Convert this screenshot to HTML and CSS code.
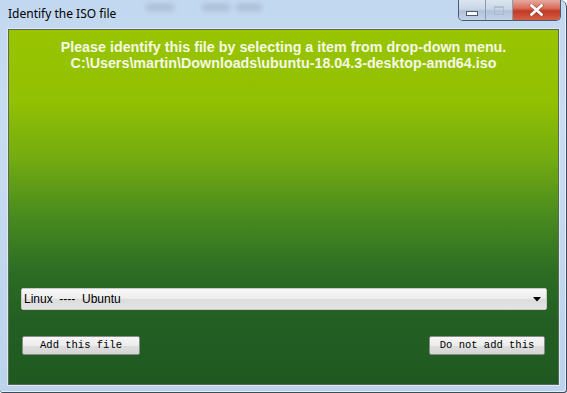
FILE: index.html
```html
<!DOCTYPE html>
<html>
<head>
<meta charset="utf-8">
<link rel="stylesheet" href="styles.css">
</head>
<body>
<div class="window">
  <div class="titlebar">
    <span class="title">Identify the ISO file</span>
    <span class="ghost g1"></span>
    <span class="ghost g2"></span>
    <span class="ghost g3"></span>
    <div class="caption">
      <div class="cbtn min"><span class="min-bar"></span></div>
      <div class="cbtn max"><span class="max-box"></span></div>
      <div class="cbtn close">
        <svg width="15" height="12" viewBox="0 0 15 12"><path d="M2.5 1.5 L12.5 10.5 M12.5 1.5 L2.5 10.5" stroke="#7a2a20" stroke-width="4.2" stroke-linecap="round" stroke-opacity="0.45"/><path d="M2.5 1.5 L12.5 10.5 M12.5 1.5 L2.5 10.5" stroke="#fff" stroke-width="2.8" stroke-linecap="round"/></svg>
      </div>
    </div>
  </div>
  <div class="body-row">
    <div class="client">
      <div class="message">
        <p>Please identify this file by selecting a item from drop-down menu.</p>
        <p>C:\Users\martin\Downloads\ubuntu-18.04.3-desktop-amd64.iso</p>
      </div>
      <div class="select">
        <span>Linux&nbsp; ----&nbsp; Ubuntu</span>
        <svg class="arrow" width="8" height="5" viewBox="0 0 8 5"><path d="M0 0 H8 L4 4.5 Z" fill="#000"/></svg>
      </div>
      <div class="actions">
        <button class="btn add">Add this file</button>
        <button class="btn skip">Do not add this</button>
      </div>
    </div>
  </div>
</div>
</body>
</html>
```

FILE: styles.css
```css
html, body {
  margin: 0;
  padding: 0;
  width: 567px;
  height: 393px;
  overflow: hidden;
  background: #ffffff;
}

.window {
  width: 566px;
  height: 392px;
  display: flex;
  flex-direction: column;
  background: linear-gradient(180deg, #c2d8f0 0%, #c9dcf1 30%, #bcd3ec 100%);
  border-right: 1px solid #3d4a5c;
  border-bottom: 1px solid #3d4a5c;
  border-top-right-radius: 7px;
  border-bottom-left-radius: 3px;
  border-bottom-right-radius: 3px;
  box-shadow: inset -1px -1px 0 #e4eefa;
}

.titlebar {
  height: 29px;
  display: flex;
  align-items: flex-start;
  font-family: "Noto Sans", "DejaVu Sans", sans-serif;
}

.title {
  font-size: 12px;
  color: #000;
  margin: 6px 0 0 8px;
  line-height: 16px;
}

.ghost {
  display: block;
  height: 7px;
  margin-top: 4px;
  background: #8797ad;
  filter: blur(2.5px);
  opacity: 0.4;
  border-radius: 4px;
}
.g1 { width: 28px; margin-left: 30px; }
.g2 { width: 28px; margin-left: 28px; }
.g3 { width: 26px; margin-left: 6px; }

.caption {
  display: flex;
  margin-left: auto;
  margin-right: 5px;
  height: 20px;
  border: 1px solid #4b5a70;
  border-top: none;
  border-radius: 0 0 5px 5px;
  overflow: hidden;
}

.cbtn {
  height: 20px;
  display: flex;
  align-items: center;
  justify-content: center;
}

.min, .max {
  width: 26px;
  background: linear-gradient(180deg, #dbe5f1 0%, #c9d6e6 45%, #b1c2d8 55%, #c3d3e6 100%);
  border-right: 1px solid #8b9bb0;
}

.min-bar {
  display: block;
  width: 10px;
  height: 3px;
  background: #fff;
  border: 1px solid #4d5b6e;
  margin-top: 6px;
}

.max-box {
  display: block;
  width: 8px;
  height: 6px;
  border: 1px solid #aab8cb;
  border-top-width: 2px;
  opacity: 0.8;
}

.close {
  width: 47px;
  background: linear-gradient(180deg, #e6a89c 0%, #d86f5e 40%, #c13a26 55%, #d45f44 100%);
}

.body-row {
  flex: 1;
  display: flex;
  padding: 0 7px 7px 8px;
}

.client {
  flex: 1;
  display: flex;
  flex-direction: column;
  border: 1px solid #5a6a56;
  background: linear-gradient(180deg, #98c400 0%, #92c003 20%, #75ac10 36%, #4a8c1e 52%, #2c6d24 68%, #235f23 82%, #1f5921 100%);
  box-shadow: 0 0 0 1px #dce8f6;
}

.message {
  padding-top: 9px;
  text-align: center;
  font-family: "Liberation Sans", Arial, sans-serif;
  font-size: 14.3px;
  font-weight: bold;
  color: #f5f8e6;
  line-height: 16px;
}

.message p {
  margin: 0;
}

.select {
  margin: auto 11px 0 12px;
  height: 20px;
  border: 1px solid #c9c9c9;
  border-radius: 2px;
  background: linear-gradient(180deg, #f8f8f8 0%, #ececec 50%, #dcdcdc 51%, #e4e4e4 100%);
  display: flex;
  align-items: center;
  padding: 0 5px 0 2px;
  font-family: "Liberation Sans", Arial, sans-serif;
  font-size: 12px;
  color: #000;
}

.select span {
  flex: 1;
}

.arrow {
  display: block;
  margin-top: 1px;
}

.actions {
  display: flex;
  justify-content: space-between;
  padding: 26px 13px 29px 13px;
}

.btn {
  height: 19px;
  padding: 0;
  border: 1px solid #8a8a8a;
  border-radius: 2px;
  background: linear-gradient(180deg, #f6f6f6 0%, #ececec 50%, #dedede 51%, #d6d6d6 100%);
  font-family: "Liberation Mono", "DejaVu Sans Mono", monospace;
  font-size: 10.5px;
  color: #000;
  line-height: 17px;
}

.add { width: 118px; }
.skip { width: 116px; }
```
